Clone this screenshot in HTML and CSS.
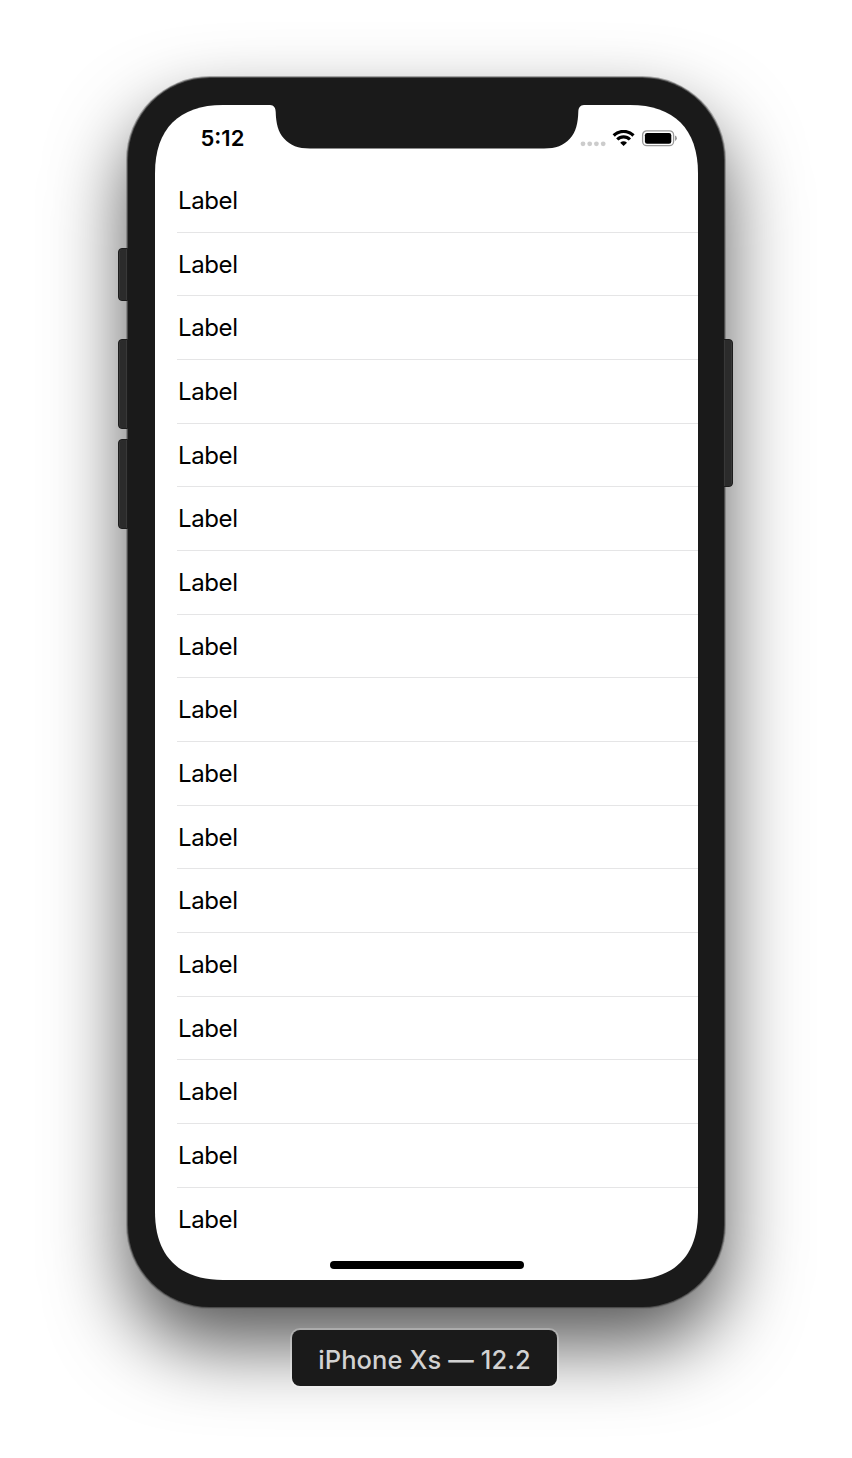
FILE: index.html
```
<!DOCTYPE html>
<html lang="en">
<head>
<meta charset="utf-8">
<title>iPhone Xs — 12.2</title>
<link rel="stylesheet" href="styles.css">
</head>
<body>
<main class="simulator">
  <div class="device">
    <span class="button mute"></span>
    <span class="button volume-up"></span>
    <span class="button volume-down"></span>
    <span class="button power"></span>
    <div class="screen">
      <svg class="notch" width="314" height="44" viewBox="0 0 314 44"><path d="M0 0C4 .3 5.500 2.500 5.700 7C6 18 8 27 14 33.500C20.500 40.500 28 43.500 40 43.500H274C286 43.500 293.500 40.500 300 33.500C306 27 308 18 308.300 7C308.500 2.500 310 .3 314 0Z" fill="#1a1a1a"/></svg>
      <header class="status">
        <time class="clock">5:12</time>
        <div class="indicators">
          <svg width="98" height="20" viewBox="0 0 98 20">
            <g fill="#ccc"><circle cx="3" cy="13.800" r="2.400"/><circle cx="9.700" cy="13.800" r="2.400"/><circle cx="16.400" cy="13.800" r="2.400"/><circle cx="23.200" cy="13.800" r="2.400"/></g>
            <g fill="none" stroke="#000" stroke-width="3.200"><path d="M33.700 5.500A14 14 0 0 1 53.500 5.500"/><path d="M37.300 9.500A8.800 8.800 0 0 1 49.900 9.500"/></g>
            <path d="M40.200 12.700Q43.600 9.900 47 12.700L43.600 16.100Z"/>
            <rect x="62.600" y=".8" width="31" height="14.900" rx="4.200" fill="none" stroke="#999" stroke-width="1.300"/>
            <rect x="64.900" y="3" width="26.400" height="10.700" rx="2.200"/>
            <path d="M95 5.600Q96.900 6.300 96.900 8.200T95 10.900Z" fill="#999"/>
          </svg>
        </div>
      </header>
      <ul class="list">
        <li>Label</li><li>Label</li><li>Label</li><li>Label</li><li>Label</li><li>Label</li>
        <li>Label</li><li>Label</li><li>Label</li><li>Label</li><li>Label</li><li>Label</li>
        <li>Label</li><li>Label</li><li>Label</li><li>Label</li><li>Label</li>
      </ul>
      <div class="home"></div>
    </div>
  </div>
  <div class="caption">iPhone Xs — 12.2</div>
</main>
</body>
</html>
```
FILE: styles.css
```
* { box-sizing: border-box; }
body {
  margin: 0;
  background: #fff;
  font-family: Inter, "Liberation Sans", sans-serif;
  color: #000;
}
.simulator {
  height: 1458px;
  padding: 78px 0 0 128px;
  overflow: hidden;
}
.device {
  position: relative;
  width: 596px;
  height: 1229px;
  padding: 27px 26px 27px 27px;
  border-radius: 82px;
  background: #1a1a1a;
  box-shadow: 0 0 0 1px #4c4c4c, 0 0 0 2px rgba(100, 100, 100, .5), 0 37px 78px rgba(0, 0, 0, .67);
}
.screen {
  position: relative;
  width: 543px;
  height: 1175px;
  background: #fff;
  clip-path: path("M0 68C0 24 24 0 68 0H475C519 0 543 24 543 68V1107C543 1151 519 1175 475 1175H68C24 1175 0 1151 0 1107Z");
}
.notch {
  position: absolute;
  left: 115px;
  top: 0;
}
.button {
  position: absolute;
  left: -10px;
  width: 10px;
  background: #2b2b2b;
  border: 1px solid #1c1c1c;
  border-radius: 4px 0 0 4px;
  box-shadow: inset 1px 0 #383838, inset -1px 0 #383838;
}
.mute { top: 170px; height: 53px; }
.volume-up { top: 261px; height: 90px; }
.volume-down { top: 361px; height: 90px; }
.power {
  top: 261px;
  left: 595px;
  height: 148px;
  border-radius: 0 4px 4px 0;
}
.status {
  display: flex;
  justify-content: space-between;
  height: 64px;
  padding: 20px 20px 0 45.500px;
}
.clock {
  font-size: 22px;
  font-weight: 600;
  line-height: 26px;
}
.indicators { padding-top: 5px; }
.indicators svg { display: block; }
.list {
  margin: 0;
  padding: 0 0 0 22px;
  list-style: none;
}
.list li {
  height: 63.66px;
  padding-left: 1px;
  border-bottom: 1px solid #e5e5e6;
  font-size: 24px;
  line-height: 63px;
  letter-spacing: -.4px;
}
.list li:last-child { border-bottom: 0; }
.home {
  width: 194px;
  height: 7.500px;
  margin: 10px 0 0 175px;
  border-radius: 4px;
  background: #000;
}
.caption {
  position: relative;
  width: 265px;
  height: 56px;
  margin: 23px 0 0 164px;
  border-radius: 8px;
  background: #1a1a1a;
  box-shadow: 0 0 0 2px rgba(255, 255, 255, .25);
  color: #d2d2d2;
  font-size: 25.500px;
  font-weight: 500;
  line-height: 60px;
  text-align: center;
  letter-spacing: .1px;
}
```
